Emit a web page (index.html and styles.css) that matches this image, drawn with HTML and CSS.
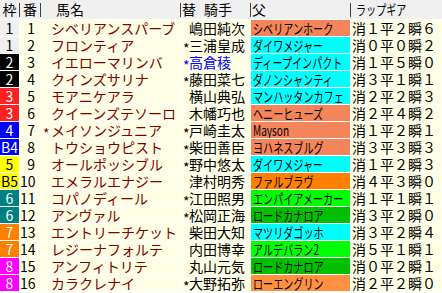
FILE: index.html
```html
<!DOCTYPE html>
<html lang="ja">
<head>
<meta charset="utf-8">
<link rel="stylesheet" href="styles.css">
</head>
<body>
<div class="table">
  <div class="head">
    <div class="h h-waku">枠</div>
    <div class="h h-num">番</div>
    <div class="h h-name">馬名</div>
    <div class="h h-jockey"><span>替</span><span class="sp">騎手</span></div>
    <div class="h h-sire">父</div>
    <div class="h h-lap"><span class="narrow">ラップギア</span></div>
  </div>

  <div class="row"><div class="waku w1">1</div><div class="num">1</div><div class="name"><span class="mk"></span><span>シベリアンスパーブ</span></div><div class="jockey"><span class="mk"></span><span>嶋田純次</span></div><div class="sire coral"><span class="narrow">シベリアンホーク</span></div><div class="lap">消１平２瞬６</div></div>
  <div class="row"><div class="waku w1">1</div><div class="num">2</div><div class="name"><span class="mk"></span><span>フロンティア</span></div><div class="jockey"><span class="mk">*</span><span>三浦皇成</span></div><div class="sire cyan"><span class="narrow">ダイワメジャー</span></div><div class="lap">消０平０瞬２</div></div>
  <div class="row"><div class="waku w2">2</div><div class="num">3</div><div class="name"><span class="mk"></span><span>イエローマリンバ</span></div><div class="jockey blue"><span class="mk">*</span><span>高倉稜</span></div><div class="sire cyan"><span class="narrow">ディープインパクト</span></div><div class="lap">消１平５瞬０</div></div>
  <div class="row"><div class="waku w2">2</div><div class="num">4</div><div class="name"><span class="mk"></span><span>クインズサリナ</span></div><div class="jockey"><span class="mk">*</span><span>藤田菜七</span></div><div class="sire cyan"><span class="narrow">ダノンシャンティ</span></div><div class="lap">消３平１瞬１</div></div>
  <div class="row"><div class="waku w3">3</div><div class="num">5</div><div class="name"><span class="mk"></span><span>モアニケアラ</span></div><div class="jockey"><span class="mk"></span><span>横山典弘</span></div><div class="sire cyan"><span class="narrow">マンハッタンカフェ</span></div><div class="lap">消２平２瞬３</div></div>
  <div class="row"><div class="waku w3">3</div><div class="num">6</div><div class="name"><span class="mk"></span><span>クイーンズテソーロ</span></div><div class="jockey"><span class="mk"></span><span>木幡巧也</span></div><div class="sire coral"><span class="narrow">ヘニーヒューズ</span></div><div class="lap">消２平４瞬２</div></div>
  <div class="row"><div class="waku w4">4</div><div class="num">7</div><div class="name"><span class="mk">*</span><span>メイソンジュニア</span></div><div class="jockey"><span class="mk">*</span><span>戸崎圭太</span></div><div class="sire coral"><span class="narrow">Mayson</span></div><div class="lap">消１平２瞬１</div></div>
  <div class="row"><div class="waku w4">B4</div><div class="num">8</div><div class="name"><span class="mk"></span><span>トウショウピスト</span></div><div class="jockey"><span class="mk">*</span><span>柴田善臣</span></div><div class="sire coral"><span class="narrow">ヨハネスブルグ</span></div><div class="lap">消３平３瞬３</div></div>
  <div class="row"><div class="waku w5">5</div><div class="num">9</div><div class="name"><span class="mk"></span><span>オールポッシブル</span></div><div class="jockey"><span class="mk">*</span><span>野中悠太</span></div><div class="sire cyan"><span class="narrow">ダイワメジャー</span></div><div class="lap">消１平２瞬３</div></div>
  <div class="row"><div class="waku w5">B5</div><div class="num">10</div><div class="name"><span class="mk"></span><span>エメラルエナジー</span></div><div class="jockey"><span class="mk"></span><span>津村明秀</span></div><div class="sire orange"><span class="narrow">ファルブラヴ</span></div><div class="lap">消４平３瞬０</div></div>
  <div class="row"><div class="waku w6">6</div><div class="num">11</div><div class="name"><span class="mk"></span><span>コパノディール</span></div><div class="jockey"><span class="mk">*</span><span>江田照男</span></div><div class="sire lime"><span class="narrow">エンパイアメーカー</span></div><div class="lap">消１平１瞬１</div></div>
  <div class="row"><div class="waku w6">6</div><div class="num">12</div><div class="name"><span class="mk"></span><span>アンヴァル</span></div><div class="jockey"><span class="mk">*</span><span>松岡正海</span></div><div class="sire green"><span class="narrow">ロードカナロア</span></div><div class="lap">消３平２瞬０</div></div>
  <div class="row"><div class="waku w7">7</div><div class="num">13</div><div class="name"><span class="mk"></span><span>エントリーチケット</span></div><div class="jockey"><span class="mk"></span><span>柴田大知</span></div><div class="sire cyan"><span class="narrow">マツリダゴッホ</span></div><div class="lap">消３平２瞬４</div></div>
  <div class="row"><div class="waku w7">7</div><div class="num">14</div><div class="name"><span class="mk"></span><span>レジーナフォルテ</span></div><div class="jockey"><span class="mk"></span><span>内田博幸</span></div><div class="sire lime"><span class="narrow">アルデバラン2</span></div><div class="lap">消５平１瞬１</div></div>
  <div class="row"><div class="waku w8">8</div><div class="num">15</div><div class="name"><span class="mk"></span><span>アンフィトリテ</span></div><div class="jockey"><span class="mk"></span><span>丸山元気</span></div><div class="sire green"><span class="narrow">ロードカナロア</span></div><div class="lap">消０平２瞬１</div></div>
  <div class="row"><div class="waku w8">8</div><div class="num">16</div><div class="name"><span class="mk"></span><span>カラクレナイ</span></div><div class="jockey"><span class="mk">*</span><span>大野拓弥</span></div><div class="sire salmon"><span class="narrow">ローエングリン</span></div><div class="lap">消２平２瞬０</div></div>
</div>
</body>
</html>
```

FILE: styles.css
```css
html, body {
  margin: 0;
  padding: 0;
  background: #ffffff;
}
body {
  width: 442px;
  height: 293px;
  overflow: hidden;
  font-family: "Noto Sans CJK JP", "Noto Sans", sans-serif;
  font-size: 14px;
  line-height: 16px;
  color: #000;
}
.table {
  display: grid;
  row-gap: 1px;
}
.head {
  display: grid;
  grid-template-columns: 19px 21px 140px 70px 100px 92px;
  height: 19px;
  background: #f0f0f0;
}
.h {
  line-height: 19px;
  white-space: nowrap;
  background: linear-gradient(#404040, #404040) left 3px / 1px 14px no-repeat;
}
.h-waku { text-align: center; background: none; }
.h-num { text-align: center; padding-left: 1px; }
.h-name { padding-left: 16px; }
.h-jockey { padding-left: 2px; }
.h-jockey .sp { margin-left: 8px; }
.h-sire { padding-left: 2px; }
.h-lap { padding-left: 6px; }

.row {
  display: grid;
  grid-template-columns: 19px 20px 139px 69px 99px 91px;
  column-gap: 1px;
  height: 16px;
}
.row > div {
  white-space: nowrap;
  background: #ffffe6;
}
.row > .waku {
  text-align: center;
  color: #fff;
}
.row > .w1 { background: #f0f0f0; color: #000; }
.row > .w2 { background: #000000; }
.row > .w3 { background: #ff2020; }
.row > .w4 { background: #0000ff; }
.row > .w5 { background: #ffff00; color: #000; }
.row > .w6 { background: #008080; }
.row > .w7 { background: #ff8000; }
.row > .w8 { background: #ff00ff; }

.num {
  text-align: right;
  padding-right: 5px;
}
.name {
  display: flex;
  color: #800000;
  padding-left: 2px;
}
.mk {
  flex: none;
  width: 8px;
  height: 13px;
  padding-top: 3px;
  line-height: 16px;
}
.jockey {
  display: flex;
  padding-left: 2px;
}
.jockey .mk { width: 6px; }
.blue { color: #0000ff; }

.row > .sire { padding-left: 2px; overflow: hidden; }
.row > .coral { background: #f4845a; }
.row > .salmon { background: #ff9040; }
.row > .orange { background: #ff8000; }
.row > .cyan { background: #00ffff; }
.row > .lime { background: #00ff00; }
.row > .green { background: #00c000; }

.narrow {
  display: inline-block;
  transform: scaleX(0.72);
  transform-origin: 0 50%;
}
.lap { padding-left: 1px; }
```
